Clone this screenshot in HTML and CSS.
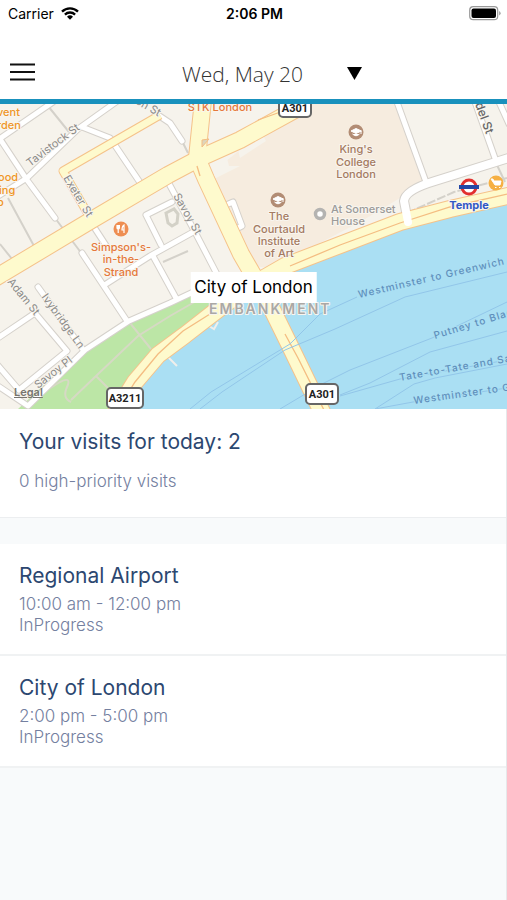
FILE: index.html
```
<!DOCTYPE html>
<html lang="en">
<head>
  <meta charset="UTF-8">
  <meta name="viewport" content="width=device-width, initial-scale=1">
  <title>Visits</title>
  <link rel="stylesheet" href="styles.css">
</head>
<body>

  <!-- Status bar -->
  <div class="status-bar">
    <div class="carrier">
      <span>Carrier</span>
      <svg width="18" height="13" viewBox="0 0 18 13" aria-hidden="true">
        <path d="M1 4.6a11.5 11.5 0 0 1 16 0" fill="none" stroke="#000" stroke-width="2.4"/>
        <path d="M3.9 7.6a7.3 7.3 0 0 1 10.2 0" fill="none" stroke="#000" stroke-width="2.3"/>
        <path d="M9 12.8L6 9.8a4.3 4.3 0 0 1 6 0z"/>
      </svg>
    </div>
    <div class="clock">2:06 PM</div>
    <div class="battery">
      <svg width="32" height="15" viewBox="0 0 32 15" aria-hidden="true">
        <rect x="0.7" y="0.7" width="28" height="13" rx="3.5" fill="#fff" stroke="#999" stroke-width="1.2"/>
        <rect x="2.5" y="2.5" width="24.5" height="9.5" rx="2"/>
        <path d="M30.2 5v4.5q1.4-.8 1.4-2.2T30.2 5z" fill="#999"/>
      </svg>
    </div>
  </div>

  <header>
    <button class="menu-button" type="button" aria-label="Menu">
      <svg width="25" height="18" viewBox="0 0 25 18" aria-hidden="true">
        <path d="M0 1.5h25M0 9h25M0 16.5h25" stroke="#111" stroke-width="2"/>
      </svg>
    </button>
    <button class="date-button" type="button">
      <span>Wed, May 20</span>
      <svg width="15" height="13" viewBox="0 0 15 13" aria-hidden="true"><path d="M0 0h15L7.5 13z"/></svg>
    </button>
  </header>

  <!-- Map -->
  <div class="map">
    <svg class="map-canvas" viewBox="0 104 507 305" role="img" aria-label="Map of Embankment, London">
      <defs>
        <path id="side-streets" d="M-5 142L53 102M0 139L27 180L55 218M-5 198L27 178L78 129L116 102M82 127L110 138L141 184M155 113L170 123L182 141M167 180L195 232L220 280M92 224L107 247M82 253L127 321M106 284L150 256L195 231M172 202L146 215L161 245M153 256L176 298M226 205l7-3 9 24-8 4M38 287L84 351M35 313L67 351L19 390L-5 362M-5 340L35 313M-5 384L28 406L85 350L129 321L170 303L204 287"/>
        <path id="east-streets" d="M397 102L426 182M475 102L496 161M499 102L509 124"/>
        <path id="temple-place" d="M512 157L435 181Q405 190 404 201L408 222"/>
        <path id="exeter" d="M88 214L63 171L160 115"/>
        <path id="strand" d="M-5 278L90 221L168 175L200 158L240 140L300 107"/>
        <path id="bridge" d="M203 100L197 158L206 179L241 254L266 297L292 350L323 414"/>
        <path id="embankment" d="M512 195L450 209L400 222L340 245L285 266L245 289L212 314L185 335L158 355L135 382L115 414"/>
      </defs>

      <rect y="104" width="507" height="305" fill="#f6f3ec"/>

      <!-- Areas -->
      <path d="M300 104H398L424 181L405 195L360 222L272 268L252 266L210 178L222 164Z" fill="#f6ecdf"/>
      <path d="M236 141L259 128L266 141L240 158Z M209 160L226 154L229 166L240 166L212 180Z" fill="#f6f3ec"/>
      <path d="M165 308L204 287L235 278L225 296L190 324L150 356L108 409H18L60 370L100 337L130 322Z" fill="#bce6a6"/>
      <path d="M507 204L440 219L400 230L340 252L300 268L272 280L246 298L217 320L190 340L163 360L145 380L126 409H507Z" fill="#aadff3"/>
      <path d="M166 213l8-4 4 5-1 9-5 3-4-3z" fill="none" stroke="#d3d1c7" stroke-width="3"/>

      <!-- Alleys and paths -->
      <g class="alley">
        <path d="M48 106L69 132M8 198L34 246M0 244L12 259M55 218L82 254M182 141L188 153M163 262L188 251M131 266L150 256"/>
        <path d="M407 213L454 192L507 178" stroke-dasharray="9 2"/>
        <path d="M497 165L505 182"/>
      </g>
      <path class="park-path" d="M28 402L60 382Q72 376 67 387T71 402M71 400L96 376L138 336L170 316L198 300M96 376L108 388M130 323L151 349"/>

      <!-- Side streets -->
      <g class="street-edge">
        <use href="#side-streets"/>
        <use href="#east-streets"/>
        <use href="#temple-place" class="wide"/>
      </g>
      <g class="street">
        <use href="#side-streets"/>
        <use href="#east-streets"/>
      </g>
      <path d="M168 357l9 9M209 326l5 3 4-7" fill="none" stroke="#f0efeb" stroke-width="2"/>

      <!-- Main roads -->
      <g class="road-edge">
        <use href="#exeter" class="narrow"/>
        <use href="#strand"/>
        <use href="#bridge"/>
        <use href="#embankment"/>
      </g>
      <g class="road">
        <use href="#exeter" class="narrow"/>
        <use href="#embankment"/>
        <use href="#strand"/>
        <use href="#bridge"/>
      </g>
      <g fill="none" stroke="#f4bd82" stroke-width="1.3">
        <path d="M512 193L450 207L400 223L340 245L290 266M210 314L183 331L158 354L135 382L115 414"/>
        <path d="M285 334L298 358L326 414M258 120L286 110M197 166L200 176"/>
      </g>
      <path d="M202 140l7-1-7 8z" fill="#ddd5bd" stroke="#f4bd82"/>
      <g class="street">
        <use href="#temple-place" class="wide"/>
      </g>

      <!-- Ferry routes -->
      <g fill="none" stroke="#92c6e9" stroke-width="1">
        <path d="M190 409L211 392L290 344L320 314L357 297M200 409L222 392L285 350L335 329L405 297L507 272"/>
        <path d="M280 409L322 384L350 370L432 338L507 302M340 395L370 383L430 352L507 331M340 396L400 379L507 360M375 409L414 384L435 378L507 364M375 409L413 402L507 388"/>
      </g>

      <!-- Street names -->
      <g class="street-name">
        <text transform="translate(30 167) rotate(-37)">Tavistock St</text>
        <text transform="translate(126 98) rotate(30)">gton St</text>
        <text transform="translate(63 178) rotate(59)">Exeter St</text>
        <text transform="translate(173 196) rotate(60)">Savoy St</text>
        <text transform="translate(7 282) rotate(51)">Adam St</text>
        <text transform="translate(41 297) rotate(54)">Ivybridge Ln</text>
        <text transform="translate(38 389) rotate(-38)">Savoy Pl</text>
        <text class="dark" transform="translate(475 104) rotate(70)">del St</text>
      </g>

      <!-- Ferry names -->
      <g class="ferry-name">
        <text transform="translate(359 298) rotate(-13)">Westminster to Greenwich</text>
        <text transform="translate(435 339) rotate(-17)">Putney to Blac</text>
        <text transform="translate(400 381) rotate(-10)">Tate-to-Tate and Sa</text>
        <text transform="translate(414 404) rotate(-8)">Westminster to G</text>
      </g>

      <!-- Places -->
      <g class="place food">
        <text x="-3" y="116" class="edge">vent</text>
        <text x="-3" y="129" class="edge">rden</text>
        <text x="-2" y="181" class="edge">ood</text>
        <text x="-1" y="194" class="edge">ing</text>
        <text x="-3" y="206" class="edge">p</text>
        <text x="220" y="111">STK London</text>
        <text x="121" y="251">Simpson's-</text>
        <text x="121" y="263">in-the-</text>
        <text x="121" y="276">Strand</text>
      </g>
      <g class="place college">
        <text x="356" y="153">King's</text>
        <text x="356" y="166">College</text>
        <text x="356" y="178">London</text>
        <text x="279" y="220">The</text>
        <text x="279" y="233">Courtauld</text>
        <text x="279" y="245">Institute</text>
        <text x="279" y="257">of Art</text>
      </g>
      <g class="place house">
        <text x="331" y="213">At Somerset</text>
        <text x="331" y="225">House</text>
      </g>
      <text class="place station" x="469" y="209">Temple</text>
      <text class="district" x="209" y="314">EMBANKMENT</text>

      <!-- Place icons -->
      <circle cx="121" cy="229" r="7.5" fill="#ee8e52"/>
      <path d="M117 225v3q0 1 1.2 1v4M119.4 225v3q0 1-1.2 1v-4M124 233v-8q-2 1-2 5h2" fill="none" stroke="#fff" stroke-width="1.2"/>
      <g id="college-icon">
        <circle cx="356" cy="132" r="7.5" fill="#b28c74"/>
        <path d="M351 131l5-2.500 5.500 2.500-5.500 2.500zM352.500 134q3.500 3.500 7 0M361 131v3" fill="#fff" stroke="#fff"/>
      </g>
      <use href="#college-icon" x="-78" y="68"/>
      <circle cx="320" cy="214" r="4.5" fill="#fff" stroke="#b4b3b1" stroke-width="3.5"/>
      <circle cx="469" cy="187" r="7" fill="#fff" stroke="#e2302f" stroke-width="3"/>
      <path d="M459 187h20" stroke="#2347a6" stroke-width="4"/>
      <circle cx="496" cy="183" r="7.5" fill="#f6b043"/>
      <path d="M491 179h2l.7 2h7.300l-1 4h-5zM495 187.500h1.500M499 187.500h1.500" fill="#fff" stroke="#fff"/>

      <!-- Road shields -->
      <g class="shield">
        <rect x="279" y="98" width="32" height="19" rx="4"/>
        <text x="295" y="112">A301</text>
        <rect x="306" y="384" width="32" height="20" rx="4"/>
        <text x="322" y="398">A301</text>
        <rect x="107" y="388" width="36" height="20" rx="4"/>
        <text x="125" y="402">A3211</text>
      </g>
    </svg>
    <div class="map-label">City of London</div>
    <a class="legal" href="#">Legal</a>
  </div>

  <main>
    <section class="summary">
      <h1>Your visits for today: 2</h1>
      <p>0 high-priority visits</p>
    </section>

    <!-- Visit list -->
    <ul class="visits">
      <li class="visit">
        <h2>Regional Airport</h2>
        <p>10:00 am - 12:00 pm</p>
        <p>InProgress</p>
      </li>
      <li class="visit">
        <h2>City of London</h2>
        <p>2:00 pm - 5:00 pm</p>
        <p>InProgress</p>
      </li>
    </ul>
  </main>

</body>
</html>
```

FILE: styles.css
```
/* Basic Styles */
* {
  box-sizing: border-box;
}
body {
  display: flex;
  flex-direction: column;
  font-family: Inter, "Liberation Sans", sans-serif;
  margin: 0;
  min-height: 100vh;
  background-color: #f8fafb;
  color: #000;
}
h1, h2, p {
  margin: 0;
}
button {
  display: flex;
  align-items: center;
  padding: 0;
  border: 0;
  background: none;
  cursor: pointer;
}
/* Status bar */
.status-bar {
  display: grid;
  grid-template-columns: 1fr auto 1fr;
  align-items: center;
  height: 27px;
  padding: 0 6px 0 8px;
  background: #fff;
  font-size: 14px;
}
.carrier {
  display: flex;
  align-items: center;
  gap: 7px;
}
.clock {
  font-weight: 600;
}
.battery {
  display: flex;
  justify-content: flex-end;
}
/* Header */
header {
  display: grid;
  grid-template-columns: 1fr auto 1fr;
  align-items: center;
  height: 77px;
  padding: 18px 10px 0;
  background: #fff;
  border-bottom: 5px solid #1991bd;
}
.menu-button {
  width: 25px;
  height: 36px;
}
.date-button {
  gap: 44px;
  padding: 3px 0 0 37px;
  font-family: "Open Sans", "Noto Sans", sans-serif;
  font-size: 21px;
  font-weight: 300;
  color: #333;
}
/* Map */
.map {
  position: relative;
  overflow: hidden;
}
.map-canvas {
  display: block;
  width: 100%;
  height: auto;
}
.map-label {
  position: absolute;
  left: 50%;
  top: 55%;
  transform: translateX(-50%);
  padding: 4px;
  background: #fff;
  font-size: 17px;
  line-height: 23px;
  white-space: nowrap;
}
.legal {
  position: absolute;
  left: 14px;
  bottom: 10px;
  font-size: 11px;
  font-weight: 600;
  line-height: 14px;
  color: #77756f;
}
.alley {
  fill: none;
  stroke: #d4d1ca;
  stroke-width: 2;
}
.park-path {
  fill: none;
  stroke: #d6d9c4;
  stroke-width: 2;
}
.street-edge, .street, .road-edge, .road {
  fill: none;
  stroke-linejoin: round;
}
.street-edge {
  stroke: #d5d1cb;
  stroke-width: 7;
  stroke-linecap: round;
}
.street {
  stroke: #fff;
  stroke-width: 5;
  stroke-linecap: round;
}
.street-edge .wide {
  stroke-width: 10;
}
.street .wide {
  stroke-width: 8;
}
.road-edge {
  stroke: #f5c28a;
  stroke-width: 18;
}
.road {
  stroke: #fefacd;
  stroke-width: 16;
}
.road-edge .narrow {
  stroke-width: 9;
}
.road .narrow {
  stroke-width: 7;
}
.map text {
  paint-order: stroke;
  stroke: #f8f5ef;
  stroke-width: 2;
  stroke-linejoin: round;
}
.street-name {
  font-size: 11px;
  fill: #8b8a88;
}
.street-name .dark {
  font-size: 12px;
  font-weight: 500;
  fill: #666;
}
.map .ferry-name text {
  font-size: 10px;
  font-weight: 500;
  letter-spacing: 1px;
  fill: #5f8fbc;
  stroke: #aadff3;
}
.place {
  font-size: 11px;
  font-weight: 500;
  text-anchor: middle;
}
.food {
  fill: #e5793b;
}
.food .edge {
  text-anchor: start;
  fill: #ef9526;
}
.college {
  fill: #a57a61;
}
.house {
  fill: #9c9b99;
  text-anchor: start;
}
.station {
  font-weight: 700;
  fill: #3158c4;
}
.district {
  font-size: 14px;
  font-weight: 600;
  letter-spacing: 2px;
  fill: #aaa8a5;
}
.shield rect {
  fill: #fff;
  stroke: #666;
  stroke-width: 2;
}
.map .shield text {
  font-family: "Liberation Sans Narrow", Roboto, sans-serif;
  font-size: 11px;
  font-weight: 700;
  text-anchor: middle;
  fill: #222;
  stroke: none;
}
/* Summary */
main {
  flex: 1;
  border-right: 1px solid #e6e8ea;
}
.summary {
  padding: 20px 19px 25px;
  background: #fff;
  border-bottom: 1px solid #eceef0;
}
.summary h1, .visit h2 {
  font-size: 21px;
  font-weight: 400;
  line-height: 26px;
  color: #2c4770;
}
.summary p {
  margin-top: 16px;
}
.summary p, .visit p {
  font-size: 17px;
  font-weight: 300;
  line-height: 21px;
  color: #7480a0;
}
/* Visit list */
.visits {
  margin: 26px 0 0;
  padding: 0;
  list-style: none;
}
.visit {
  padding: 19px 19px 18px;
  background: #fff;
  border-bottom: 2px solid #f0f2f3;
}
.visit h2 {
  margin-bottom: 5px;
}
```
